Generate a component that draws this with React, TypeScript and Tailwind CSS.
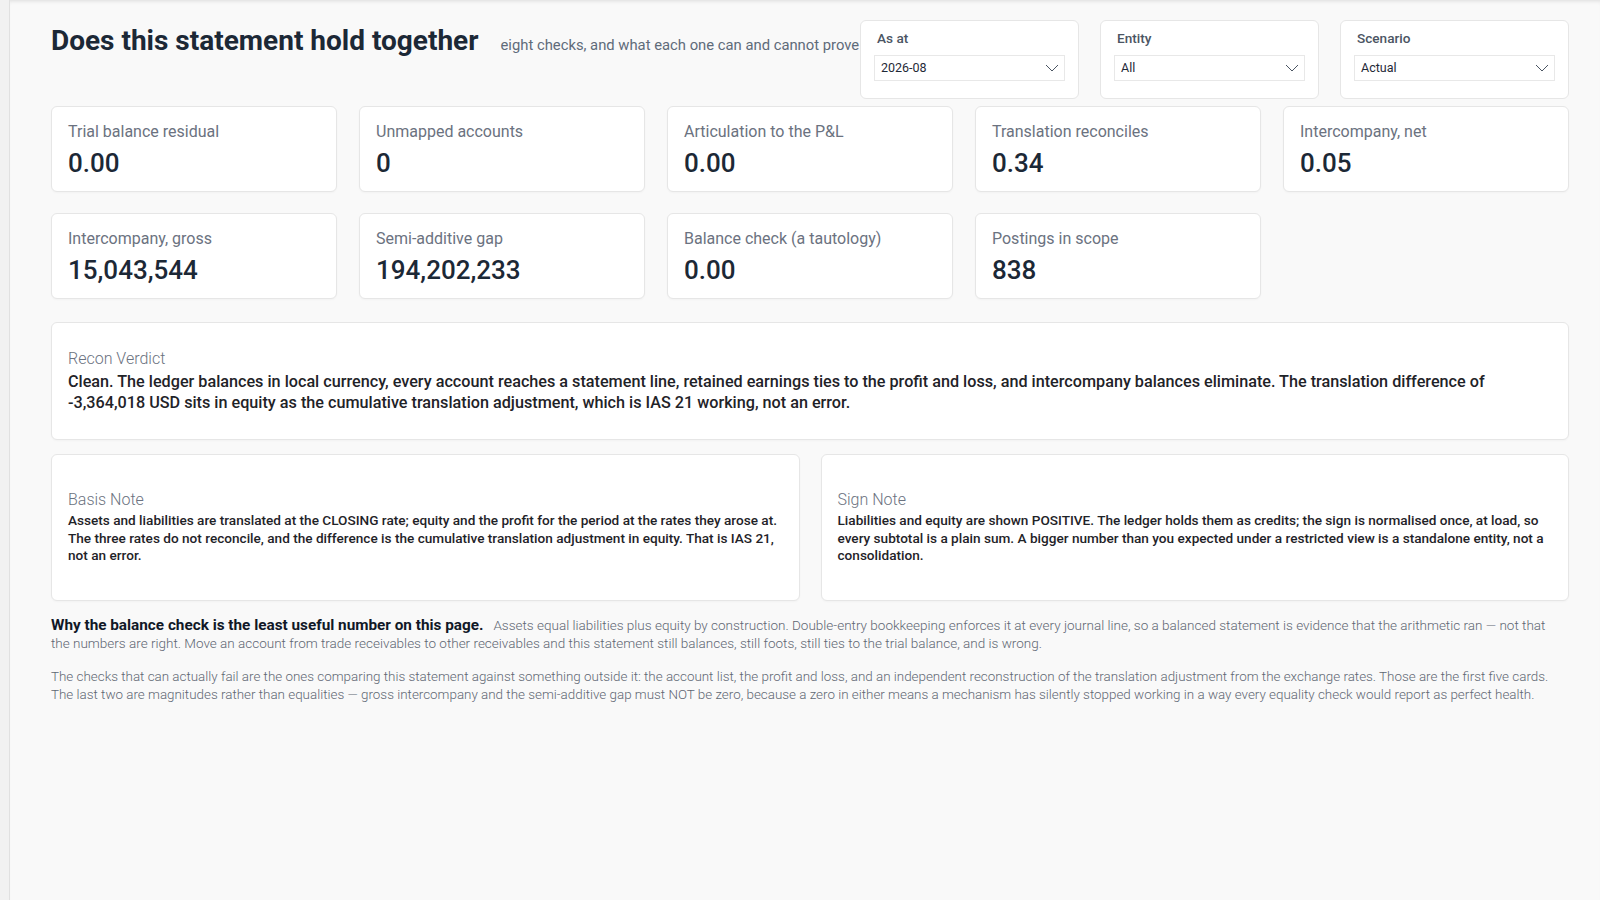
import React from "react";

const kpis = [
  { label: "Trial balance residual", value: "0.00" },
  { label: "Unmapped accounts", value: "0" },
  { label: "Articulation to the P&L", value: "0.00" },
  { label: "Translation reconciles", value: "0.34" },
  { label: "Intercompany, net", value: "0.05" },
  { label: "Intercompany, gross", value: "15,043,544" },
  { label: "Semi-additive gap", value: "194,202,233" },
  { label: "Balance check (a tautology)", value: "0.00" },
  { label: "Postings in scope", value: "838" },
];

const filters = [
  { label: "As at", value: "2026-08", width: "w-[219px]" },
  { label: "Entity", value: "All", width: "w-[219px]" },
  { label: "Scenario", value: "Actual", width: "w-[229px]" },
];

function Chevron() {
  return (
    <svg width="14" height="8" viewBox="0 0 14 8" fill="none">
      <path d="M1 1l6 6 6-6" stroke="#4b5563" strokeWidth="1" />
    </svg>
  );
}

function NoteCard({ title, children }: { title: string; children: React.ReactNode }) {
  return (
    <div className="h-[147px] bg-white border border-[#e6e6e6] rounded-[6px] px-[16px] flex flex-col justify-center shadow-[0_1px_2px_rgba(0,0,0,0.03)]">
      <div className="text-[16px] leading-[20px] font-light text-[#6b7280]">{title}</div>
      <p className="mt-[2px] text-[13.6px] leading-[17.5px] font-medium text-[#1f2328]">{children}</p>
    </div>
  );
}

export default function App() {
  return (
    <div className="flex h-screen bg-[#f9f9f9] font-['Roboto','Open_Sans',sans-serif] text-[#1f2937]">
      <div className="w-[10px] shrink-0 bg-[#f1f1f1] border-r border-[#e0e0e0]" />
      <main className="flex-1 pl-[41px] pr-[31px] pt-[20px] shadow-[inset_0_4px_4px_-3px_rgba(0,0,0,0.12)]">
        <header className="flex items-start justify-between">
          <div className="flex items-baseline gap-[22px] pt-[4px] whitespace-nowrap">
            <h1 className="text-[28px] leading-[34px] font-bold text-[#1c2836]">Does this statement hold together</h1>
            <p className="text-[14.8px] text-[#5f6b7a]">eight checks, and what each one can and cannot prove</p>
          </div>
          <div className="flex gap-[21px] shrink-0">
            {filters.map((f) => (
              <div
                key={f.label}
                className={`${f.width} h-[79px] bg-white border border-[#e6e6e6] rounded-[6px] px-[13px] pt-[8px]`}
              >
                <div className="pl-[3px] text-[13.6px] leading-[18px] font-medium text-[#4b5563]">{f.label}</div>
                <div className="mt-[8px] h-[26px] border border-[#e8e8e8] flex items-center justify-between pl-[6px] pr-[5px] text-[12.5px] text-[#1f2937]">
                  <span>{f.value}</span>
                  <Chevron />
                </div>
              </div>
            ))}
          </div>
        </header>

        <section className="mt-[7px] grid grid-cols-5 gap-x-[22px] gap-y-[21px]">
          {kpis.map((k) => (
            <div
              key={k.label}
              className="h-[86px] bg-white border border-[#e6e6e6] rounded-[6px] px-[16px] pt-[15px] shadow-[0_1px_2px_rgba(0,0,0,0.03)]"
            >
              <div className="text-[16px] leading-[20px] text-[#6b7280]">{k.label}</div>
              <div className="mt-[5px] text-[26px] leading-[32px] font-medium text-[#1c2836]">{k.value}</div>
            </div>
          ))}
        </section>

        <section className="mt-[23px] h-[118px] bg-white border border-[#e6e6e6] rounded-[6px] px-[16px] flex flex-col justify-center shadow-[0_1px_2px_rgba(0,0,0,0.03)]">
          <div className="text-[16px] leading-[20px] font-light text-[#6b7280]">Recon Verdict</div>
          <p className="mt-[3px] text-[16.2px] leading-[20.5px] font-medium text-[#1f2328]">
            Clean. The ledger balances in local currency, every account reaches a statement line, retained earnings ties
            to the profit and loss, and intercompany balances eliminate. The translation difference of
            <br />
            -3,364,018 USD sits in equity as the cumulative translation adjustment, which is IAS 21 working, not an error.
          </p>
        </section>

        <section className="mt-[14px] grid grid-cols-2 gap-[21px]">
          <NoteCard title="Basis Note">
            Assets and liabilities are translated at the CLOSING rate; equity and the profit for the period at the rates
            they arose at.
            <br />
            The three rates do not reconcile, and the difference is the cumulative translation adjustment in equity. That
            is IAS 21,
            <br />
            not an error.
          </NoteCard>
          <NoteCard title="Sign Note">
            Liabilities and equity are shown POSITIVE. The ledger holds them as credits; the sign is normalised once, at
            load, so
            <br />
            every subtotal is a plain sum. A bigger number than you expected under a restricted view is a standalone
            entity, not a
            <br />
            consolidation.
          </NoteCard>
        </section>

        <p className="mt-[15px] text-[13.5px] leading-[18px] font-light text-[#5f6773]">
          <span className="mr-[10px] text-[15.3px] font-bold text-[#111827]">
            Why the balance check is the least useful number on this page.
          </span>
          Assets equal liabilities plus equity by construction. Double-entry bookkeeping enforces it at every journal
          line, so a balanced statement is evidence that the arithmetic ran — not that
          <br />
          the numbers are right. Move an account from trade receivables to other receivables and this statement still
          balances, still foots, still ties to the trial balance, and is wrong.
        </p>
        <p className="mt-[16px] text-[13.4px] leading-[18px] font-light text-[#5f6773]">
          The checks that can actually fail are the ones comparing this statement against something outside it: the
          account list, the profit and loss, and an independent reconstruction of the translation adjustment from the
          exchange rates. Those are the first five cards.
          <br />
          The last two are magnitudes rather than equalities — gross intercompany and the semi-additive gap must NOT be
          zero, because a zero in either means a mechanism has silently stopped working in a way every equality check
          would report as perfect health.
        </p>
      </main>
    </div>
  );
}
